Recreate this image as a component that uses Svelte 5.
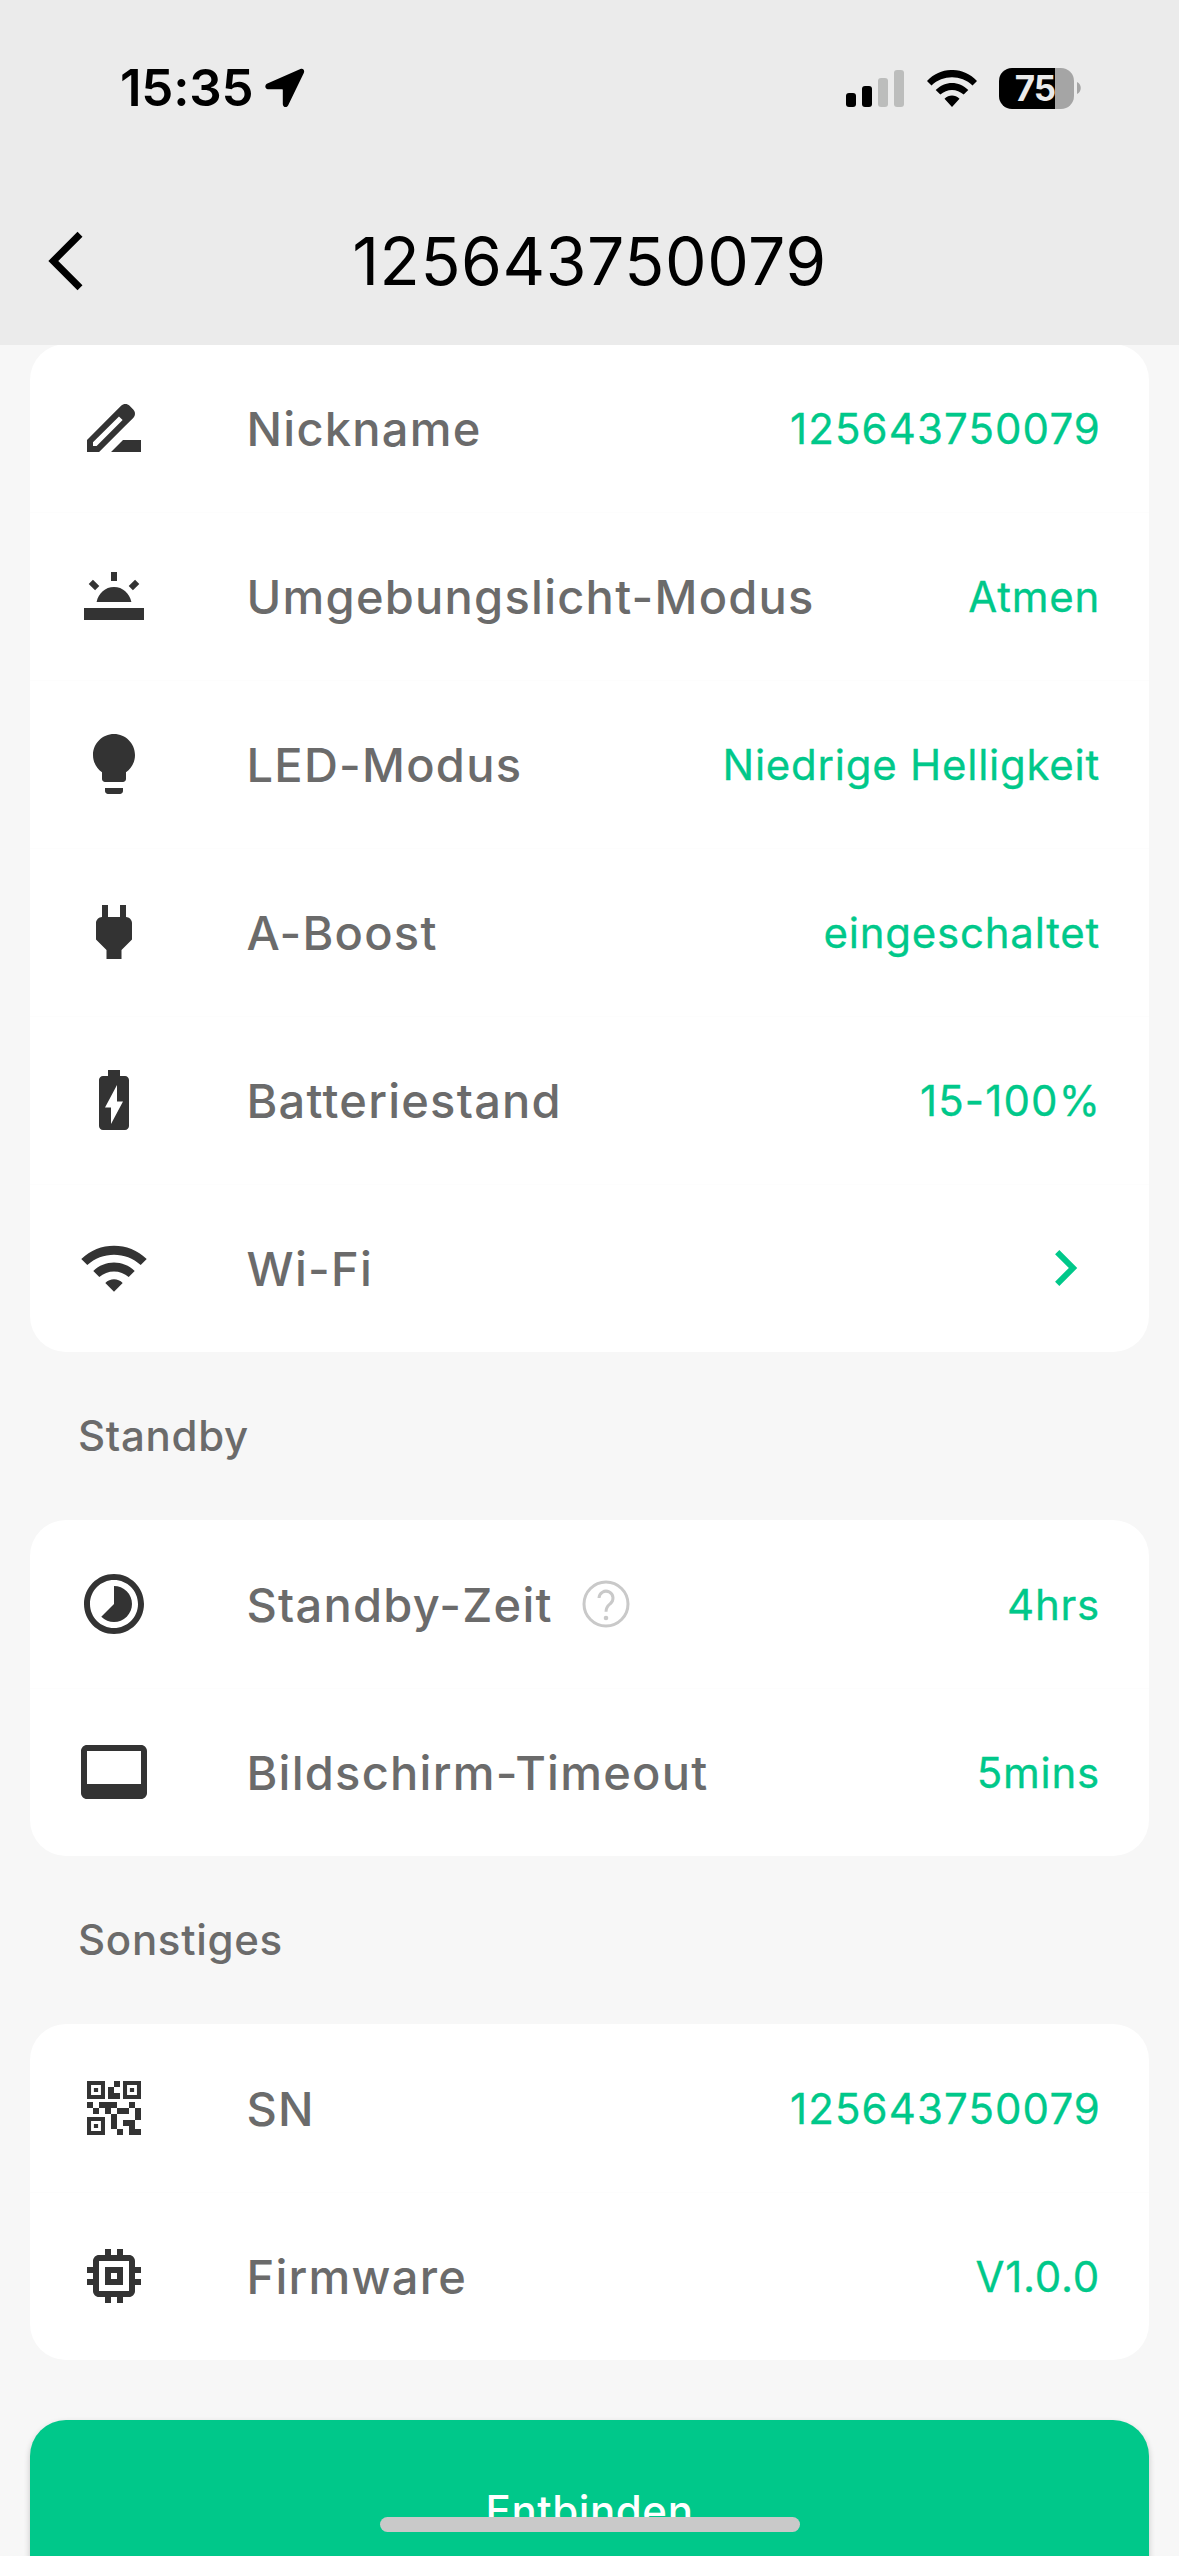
<script>
  const icons = {
    pencil: 'M18.41 5.8L17.2 4.59c-.78-.78-2.05-.78-2.83 0l-2.68 2.68L3 15.96V20h4.04l8.74-8.74 2.63-2.63c.79-.78.79-2.05 0-2.83zM6.21 18H5v-1.21l8.66-8.66 1.21 1.21L6.21 18zM11 20l4-4h6v4H11z',
    twilight: 'M2 16h20v4H2zM11 4h2v3h-2zM6.2 14C6.8 11.1 9.1 9 12 9s5.2 2.1 5.8 5zM3.57 7.98L4.98 6.57 7.1 8.69 5.69 10.1zM20.43 7.98L19.02 6.57 16.9 8.69 18.31 10.1z',
    bulb: 'M9 21c0 .55.45 1 1 1h4c.55 0 1-.45 1-1v-1H9v1zm3-19C8.14 2 5 5.14 5 9c0 2.38 1.19 4.47 3 5.74V17c0 .55.45 1 1 1h6c.55 0 1-.45 1-1v-2.26c1.81-1.27 3-3.36 3-5.74 0-3.86-3.14-7-7-7z',
    plug: 'M16.01 7L16 3h-2v4h-4V3H8v4h-.01C7 6.99 6 7.99 6 8.99v5.49L9.5 18v3h5v-3l3.5-3.51v-5.5c0-1-1-2-1.99-1.99z',
    battery: 'M15.67 4H14V2h-4v2H8.33C7.6 4 7 4.6 7 5.33v15.33C7 21.4 7.6 22 8.33 22h7.33c.74 0 1.34-.6 1.34-1.33V5.33C17 4.6 16.4 4 15.67 4zM11 20v-5.5H9L13 7v5.5h2L11 20z',
    wifi: 'M1.1 9l2 2c4.97-4.6 12.83-4.6 17.8 0l2-2C16.93 3.1 7.08 3.1 1.1 9zm8 8l2.9 2.95 2.9-2.95c-1.6-1.66-4.2-1.66-5.8 0zm-4-4l2 2c2.7-2.5 7.1-2.5 9.8 0l2-2C15.14 9.2 8.87 9.2 5.1 13z',
    timelapse: 'M16.24 7.76C15.07 6.59 13.54 6 12 6v6l-4.24 4.24c2.34 2.34 6.14 2.34 8.49 0 2.34-2.34 2.34-6.14-.01-8.48zM12 2C6.48 2 2 6.48 2 12s4.48 10 10 10 10-4.48 10-10S17.52 2 12 2zm0 18c-4.42 0-8-3.58-8-8s3.58-8 8-8 8 3.58 8 8-3.58 8-8 8z',
    screen: 'M21 3H3c-1.1 0-2 .9-2 2v14c0 1.1.9 2 2 2h18c1.1 0 2-.9 2-2V5c0-1.1-.9-2-2-2zm0 13H3V5h18v11z',
    qr: 'M3 3h6v6H3zM4.35 4.35v3.3h3.3v-3.3zM5.3 5.3h1.4v1.4H5.3zM15 3h6v6h-6zM16.35 4.35v3.3h3.3v-3.3zM17.3 5.3h1.4v1.4h-1.4zM3 15h6v6H3zM4.35 16.35v3.3h3.3v-3.3zM5.3 17.3h1.4v1.4H5.3zM12 3h2v2h-2zM10 5h2v2h2v2h-4zM3 10h2v2H3zM5 12h2v2H5zM7 10h6v2h-2v2H9v-2H7zM13 12h4v2h-4zM17 10h2v2h-2zM19 12h2v4h-2zM11 14h2v5h-2zM13 19h2v2h-2zM15 16h4v3h2v2h-4v-3h-2z',
    chip: 'M15 9H9v6h6V9zm-2 4h-2v-2h2v2zm8-2V9h-2V7c0-1.1-.9-2-2-2h-2V3h-2v2h-2V3H9v2H7c-1.1 0-2 .9-2 2v2H3v2h2v2H3v2h2v2c0 1.1.9 2 2 2h2v2h2v-2h2v2h2v-2h2c1.1 0 2-.9 2-2v-2h2v-2h-2v-2h2zm-4 6H7V7h10v10z'
  };

  const sections = [
    {
      title: '',
      rows: [
        { icon: 'pencil', label: 'Nickname', value: '125643750079' },
        { icon: 'twilight', label: 'Umgebungslicht-Modus', value: 'Atmen' },
        { icon: 'bulb', label: 'LED-Modus', value: 'Niedrige Helligkeit' },
        { icon: 'plug', label: 'A-Boost', value: 'eingeschaltet' },
        { icon: 'battery', label: 'Batteriestand', value: '15-100%' },
        { icon: 'wifi', label: 'Wi-Fi', link: true }
      ]
    },
    {
      title: 'Standby',
      rows: [
        { icon: 'timelapse', label: 'Standby-Zeit', value: '4hrs', help: true },
        { icon: 'screen', label: 'Bildschirm-Timeout', value: '5mins' }
      ]
    },
    {
      title: 'Sonstiges',
      rows: [
        { icon: 'qr', label: 'SN', value: '125643750079' },
        { icon: 'chip', label: 'Firmware', value: 'V1.0.0' }
      ]
    }
  ];

  const isNumeric = (value) => /^[\d%-]+$/.test(value);
</script>

<div class="screen">
  <header>
    <div class="status">
      <div class="clock">
        <span class="time">15:35</span>
        <svg class="location" viewBox="0 0 40 40"><path d="M35.4 1 2.4 15.600C-.7 17-.2 21.200 3 21.200h14c.6 0 .8.2.8.8V36c0 3.500 4 4.200 5.400 1.200L38.800 5C40 2 38 0 35.400 1z" /></svg>
      </div>
      <div class="indicators">
        <svg class="signal" viewBox="0 0 58 37">
          <rect y="23" width="10" height="14" rx="3" />
          <rect x="16" y="16" width="10" height="21" rx="3" />
          <rect class="off" x="32" y="8" width="10" height="29" rx="3" />
          <rect class="off" x="48" width="10" height="37" rx="3" />
        </svg>
        <svg class="wifi" viewBox="0 0 50 37"><path d="M0 11C14-3.700 36-3.700 50 11L45.500 15.500C34 4.600 16 4.600 4.500 15.500zM8.700 20C18 10.500 32 10.500 41.300 20L36.700 24.600C30 18.300 20 18.300 13.300 24.600zM17.500 28.700C22 24.500 28 24.500 32.500 28.700L25 37z" /></svg>
        <div class="battery"><span>75</span></div>
        <svg class="cap" viewBox="0 0 4 12"><path d="M0 0C5 2 5 10 0 12z" /></svg>
      </div>
    </div>
    <div class="nav">
      <svg class="back" viewBox="0 0 36 60"><path d="M32 3.200 5.300 30 32 56.800" /></svg>
      <h1>125643750079</h1>
    </div>
  </header>

  <main>
    {#each sections as section}
      {#if section.title}<h2>{section.title}</h2>{/if}
      <section class="card">
        {#each section.rows as row}
          <div class="row">
            <svg class="icon" viewBox="0 0 24 24"><path fill-rule="evenodd" d={icons[row.icon]} /></svg>
            <span class="label">{row.label}</span>
            {#if row.help}
              <svg class="help" viewBox="0 0 48 48">
                <circle cx="24" cy="24" r="22" />
                <path d="M17 18a7 7 0 1 1 11.300 5.700c-2.800 2.300-4.300 3.800-4.300 8" />
                <circle class="dot" cx="24" cy="38" r="2.300" />
              </svg>
            {/if}
            {#if row.link}
              <svg class="chevron" viewBox="0 0 24 36"><path d="M2.200 2.200 18 18 2.200 33.800" /></svg>
            {:else}
              <span class="value" class:numeric={isNumeric(row.value)}>{row.value}</span>
            {/if}
          </div>
        {/each}
      </section>
    {/each}
    <button>Entbinden</button>
  </main>
  <div class="home"></div>
</div>

<style>
  :global(body) { background: #f7f7f7; }
  .screen {
    position: relative;
    width: 1179px;
    height: 2556px;
    overflow: hidden;
    background: #f7f7f7;
    font-family: Inter, "Liberation Sans", sans-serif;
  }
  header { height: 344px; background: #ebebeb; border-bottom: 1px solid #ebebeb; margin-bottom: -1px; position: relative; z-index: 1; }
  svg { display: block; flex: none; }
  .status { height: 176px; display: flex; justify-content: space-between; align-items: center; padding: 0 98px 0 120px; box-sizing: border-box; }
  .clock, .indicators { display: flex; align-items: center; }
  .time { font-size: 51px; font-weight: 600; line-height: 60px; letter-spacing: -0.2px; }
  .location { width: 40px; height: 40px; margin-left: 12px; }
  .signal { width: 58px; height: 37px; }
  .off { fill: #bcbdbc; }
  .wifi { width: 50px; height: 37px; margin-left: 23px; }
  .battery {
    width: 75px; height: 41px; margin-left: 22px; border-radius: 13px;
    background: linear-gradient(90deg, #000 56px, #a5a5a5 56px);
    color: #ebebeb; font-size: 35px; font-weight: 700; line-height: 41px;
    padding-right: 3px; box-sizing: border-box;
    text-align: center; letter-spacing: -1px;
  }
  .cap { width: 4px; height: 12px; margin-left: 3px; fill: #a5a5a5; }
  .nav { height: 168px; padding-top: 2px; box-sizing: border-box; display: grid; grid-template-columns: 84px 1fr 84px; align-items: center; }
  .back { width: 36px; height: 60px; margin-left: 48px; fill: none; stroke: #000; stroke-width: 7; }
  h1 { margin: 0; text-align: center; font-size: 66px; font-weight: 400; line-height: 80px; letter-spacing: 0.55px; }
  main { padding: 0 30px; }
  .card { background: #fff; border-radius: 36px; overflow: hidden; }
  .row { height: 168px; display: flex; align-items: center; padding: 0 48px; box-sizing: border-box; }
  .row + .row { box-shadow: inset 0 1px #fdfdfd; }
  .icon { width: 72px; height: 72px; fill: #333; }
  .label { margin-left: 96.5px; color: #6b6b6b; font-size: 47px; font-weight: 500; letter-spacing: 1.25px; white-space: nowrap; }
  .value { margin-left: auto; padding-right: 1px; color: #00c88a; font-size: 42px; font-weight: 400; letter-spacing: 0.75px; white-space: nowrap; -webkit-text-stroke: 0.3px #00c88a; }
  .numeric { padding-right: 0; letter-spacing: 1.1px; }
  .help { width: 48px; height: 48px; margin-left: 29px; fill: none; stroke: #c9c9c9; stroke-width: 3; }
  .help .dot { fill: #c9c9c9; stroke: none; }
  .chevron { width: 24px; height: 36px; margin-left: auto; margin-right: 22px; fill: none; stroke: #00c88a; stroke-width: 6; }
  h2 { margin: 0; height: 168px; line-height: 167px; padding-left: 48px; color: #6b6b6b; font-size: 42px; font-weight: 500; letter-spacing: 0.7px; }
  button {
    display: block; width: 100%; height: 180px; margin-top: 60px; border: 0; border-radius: 36px;
    background: #00c88a; color: #fff; font: 500 42px/180px Inter, sans-serif; letter-spacing: 0.6px;
    box-shadow: 0 3px 6px #0003;
  }
  .home { position: absolute; left: 380px; bottom: 24px; width: 420px; height: 15px; border-radius: 8px; background: #c9c9c9; }
</style>
